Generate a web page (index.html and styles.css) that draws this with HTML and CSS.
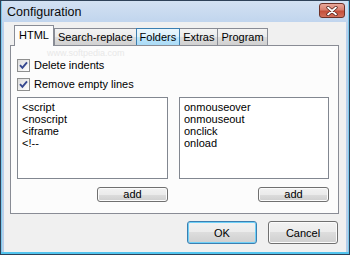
FILE: index.html
```html
<!DOCTYPE html>
<html lang="en">
<head>
    <meta charset="UTF-8">
    <title>Configuration</title>
    <link rel="stylesheet" href="styles.css">
</head>
<body>
    <div class="window">
        <div class="titlebar">
            <span class="title">Configuration</span>
            <span class="close">
                <svg width="12" height="10" viewBox="0 0 12 10">
                    <path d="M2 1.5 L10 8.5 M10 1.5 L2 8.5" stroke="#4a1a14" stroke-width="3.2" stroke-linecap="round"/>
                    <path d="M2 1.5 L10 8.5 M10 1.5 L2 8.5" stroke="#ffffff" stroke-width="1.8" stroke-linecap="round"/>
                </svg>
            </span>
        </div>
        <div class="client">
            <div class="tabs">
                <div class="tab selected">HTML</div>
                <div class="tab">Search-replace</div>
                <div class="tab hot">Folders</div>
                <div class="tab">Extras</div>
                <div class="tab">Program</div>
            </div>
            <div class="panel">
                <span class="watermark">www.softpedia.com</span>
                <label class="check">
                    <span class="box">
                        <svg width="11" height="11" viewBox="0 0 11 11">
                            <path d="M2 5.2 L4.4 7.8 L9 2.4" fill="none" stroke="#35478f" stroke-width="1.9"/>
                        </svg>
                    </span>
                    Delete indents
                </label>
                <label class="check">
                    <span class="box">
                        <svg width="11" height="11" viewBox="0 0 11 11">
                            <path d="M2 5.2 L4.4 7.8 L9 2.4" fill="none" stroke="#35478f" stroke-width="1.9"/>
                        </svg>
                    </span>
                    Remove empty lines
                </label>
                <div class="columns">
                    <div class="column">
                        <ul class="list">
                            <li>&lt;script</li>
                            <li>&lt;noscript</li>
                            <li>&lt;iframe</li>
                            <li>&lt;!--</li>
                        </ul>
                        <div class="btn-row"><button class="btn small">add</button></div>
                    </div>
                    <div class="column">
                        <ul class="list">
                            <li>onmouseover</li>
                            <li>onmouseout</li>
                            <li>onclick</li>
                            <li>onload</li>
                        </ul>
                        <div class="btn-row"><button class="btn small">add</button></div>
                    </div>
                </div>
            </div>
            <div class="actions">
                <button class="btn default">OK</button>
                <button class="btn">Cancel</button>
            </div>
        </div>
    </div>
</body>
</html>
```

FILE: styles.css
```css
* {
    box-sizing: border-box;
}
body {
    margin: 0;
    font-family: "Liberation Sans", Arial, sans-serif;
    font-size: 11px;
    color: #000;
}
.window {
    width: 350px;
    height: 255px;
    border: 1px solid #2f4258;
    background: linear-gradient(#d3e1f2, #b9d0ec 30px, #b7cfea);
    box-shadow: inset 0 -2px 0 #52c4ee, inset 1px 0 0 #7cc9ec, inset -1px 0 0 #7cc9ec;
    display: flex;
    flex-direction: column;
}
.titlebar {
    height: 21px;
    display: flex;
    align-items: center;
    justify-content: space-between;
    padding: 0 4px 0 6px;
}
.title {
    font-size: 12.5px;
    color: #0a0a0a;
}
.close {
    width: 26px;
    height: 15px;
    margin-top: -2px;
    border: 1px solid #6d3127;
    border-radius: 3px;
    background: linear-gradient(#e9a99c, #d8806f 45%, #c44e39 55%, #d3705b);
    display: flex;
    align-items: center;
    justify-content: center;
}
.client {
    flex: 1;
    margin: 0 3px 2px;
    background: #f0f0f0;
    padding: 3px 7px 0 6px;
}
.tabs {
    display: flex;
    align-items: flex-end;
    height: 21px;
    margin-bottom: -1px;
    padding-left: 4px;
}
.tab {
    height: 18px;
    padding: 0 3px;
    margin-left: -1px;
    border: 1px solid #898c95;
    border-bottom: none;
    background: linear-gradient(#f3f3f3, #ebebeb 50%, #dddddd 50%, #cfcfcf);
    line-height: 16px;
    position: relative;
}
.tab.selected {
    height: 21px;
    margin-left: 0;
    padding: 0 4px;
    background: #fcfcfc;
    z-index: 2;
    line-height: 19px;
}
.tab.selected + .tab {
    margin-left: 0;
}
.tab.hot {
    border-color: #3c7fb1;
    background: linear-gradient(#eaf6fd, #d9f0fc 50%, #bee6fd 50%, #a7d9f5);
    z-index: 1;
}
.panel {
    position: relative;
    z-index: 1;
    height: 169px;
    border: 1px solid #898c95;
    background: #fcfcfc;
    padding: 13px 8px 0 6px;
}
.watermark {
    position: absolute;
    left: 36px;
    top: 2px;
    color: #e8e8e8;
    font-size: 9px;
}
.check {
    display: flex;
    align-items: center;
    gap: 4px;
    height: 13px;
    margin-bottom: 6px;
    line-height: 13px;
}
.box {
    width: 13px;
    height: 13px;
    border: 1px solid #8e8f8f;
    background: linear-gradient(135deg, #dcdcdc, #ffffff);
    display: flex;
    align-items: center;
    justify-content: center;
}
.columns {
    display: grid;
    grid-template-columns: 151px 150px;
    column-gap: 11px;
    margin-top: 3px;
}
.list {
    list-style: none;
    margin: 0;
    height: 82px;
    padding: 3px 4px;
    border: 1px solid #828790;
    background: #fff;
    line-height: 12px;
}
.btn-row {
    display: flex;
    justify-content: flex-end;
    margin-top: 8px;
}
.btn {
    font-family: "Liberation Sans", Arial, sans-serif;
    font-size: 11px;
    color: #000;
    width: 70px;
    height: 23px;
    padding: 0;
    border: 1px solid #707070;
    border-radius: 3px;
    background: linear-gradient(#f2f2f2, #ebebeb 50%, #dddddd 50%, #cfcfcf);
    box-shadow: inset 0 0 0 1px #fbfbfb;
}
.btn.small {
    width: 71px;
    height: 15px;
    line-height: 11px;
}
.btn.default {
    border-color: #3c7fb1;
    box-shadow: inset 0 0 0 1px #6fd0f7;
}
.actions {
    display: flex;
    justify-content: flex-end;
    gap: 11px;
    margin-top: 7px;
    padding-right: 1px;
}
```
